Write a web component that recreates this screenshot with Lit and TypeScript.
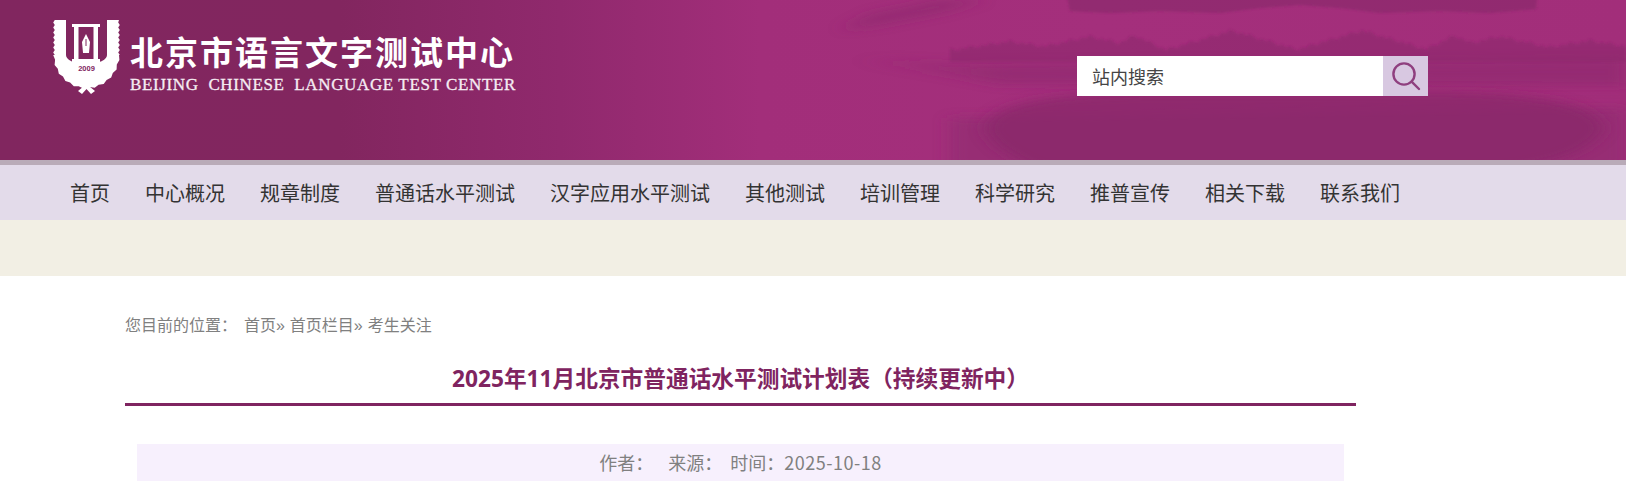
import { LitElement, html, css } from "lit";
import { customElement } from "lit/decorators.js";

const NAV = ["首页","中心概况","规章制度","普通话水平测试","汉字应用水平测试","其他测试","培训管理","科学研究","推普宣传","相关下载","联系我们"];

function jag(points: [number, number][], amp: number): string {
  // walk a polyline, adding small leaf-like teeth so the laurel edge reads as foliage
  const out: string[] = [];
  points.forEach(([x, y], i) => {
    const d = i % 2 === 0 ? amp : -amp;
    const [nx, ny] = points[Math.min(i + 1, points.length - 1)];
    const dx = ny - y, dy = x - nx;
    const l = Math.hypot(dx, dy) || 1;
    out.push(`${(x + (dx / l) * d).toFixed(1)} ${(y + (dy / l) * d).toFixed(1)}`);
  });
  return out.join(" L");
}

function arc(cx: number, cy: number, r: number, ry: number, from: number, to: number, n: number): [number, number][] {
  const pts: [number, number][] = [];
  for (let i = 0; i <= n; i++) {
    const a = from + ((to - from) * i) / n;
    pts.push([cx + r * Math.cos(a), cy + ry * Math.sin(a)]);
  }
  return pts;
}

function vline(x: number, y0: number, y1: number, n: number): [number, number][] {
  const pts: [number, number][] = [];
  for (let i = 0; i <= n; i++) pts.push([x, y0 + ((y1 - y0) * i) / n]);
  return pts;
}

const outer: [number, number][] = [
  ...vline(1, 1, 36, 14),
  ...arc(33.5, 36, 32.5, 33, Math.PI, Math.PI / 2 + 0.1, 10),
  ...arc(33.5, 36, 32.5, 33, Math.PI / 2 - 0.1, 0, 10),
  ...vline(66, 36, 1, 14),
];
const laurelPath = `M${jag(outer, 0.8)} L54 1 L54 36 C54 40 48 43 46 43 L21 43 C19 43 13 40 13 36 L13 1 Z`;

function ridge(x0: number, x1: number, base: number, step: number, peaks: [number, number, number][]): string {
  let d = `M${x0} 62 L${x0} ${base}`;
  let i = 0;
  for (let x = x0; x <= x1; x += step) {
    let h = 0;
    for (const [c, w, a] of peaks) h = Math.max(h, a * Math.max(0, 1 - Math.abs(x - c) / w));
    const t = ((i++ * 7) % 5) * 0.9;
    d += ` L${x} ${(base - h + t).toFixed(1)}`;
  }
  return d + ` L${x1} 62 Z`;
}

@customElement("app-root")
export class AppRoot extends LitElement {
  static styles = css`
    :host { display: block; font-family: "Noto Sans CJK SC", "Liberation Sans", sans-serif; background: #fff; overflow: hidden; }
    .head { position: relative; height: 160px; display: flex; justify-content: space-between; overflow: hidden;
      background: linear-gradient(90deg, #81265f 0, #82265f 340px, #90296d 560px, #a22e7a 760px, #a42f7c 1100px, #a22e7a 1626px); }
    .scenery { position: absolute; inset: 0; width: 100%; height: 100%; }
    .brand { position: relative; display: flex; gap: 10px; margin: 19px 0 0 53px; color: #fff; height: 76px; }
    .emblem { width: 67px; height: 75px; flex: none; }
    .names { display: flex; flex-direction: column; padding-top: 12px; }
    .cn { font-size: 33px; line-height: 40px; letter-spacing: 2px; font-weight: 700; white-space: nowrap; }
    .en { font-family: "Liberation Serif", serif; font-size: 17px; line-height: 18px; margin-top: 5px; white-space: pre; color: #f6edf3; letter-spacing: .63px; -webkit-text-stroke: .3px #f6edf3; }
    .search { position: relative; display: flex; width: 351px; height: 40px; margin: 56px 198px 0 0; }
    .field { flex: 1; background: #fff; color: #444; font-size: 18px; line-height: 40px; padding-left: 15px; }
    .go { width: 45px; background: #d8c8e1; display: flex; align-items: center; justify-content: center; }
    .go svg { width: 30px; height: 30px; }
    .strip { height: 5px; background: #b9abb8; }
    nav { height: 55px; background: #e3dbea; display: flex; gap: 35px; align-items: center; padding-left: 70px; font-size: 20px; color: #333; white-space: nowrap; }
    .beige { height: 56px; background: #f2efe4; }
    main { padding: 40px 0 0 125px; width: 1231px; }
    .crumb { font-family: "Liberation Sans", "Noto Sans CJK SC", sans-serif; font-size: 16px; line-height: 20px; color: #808080; white-space: pre; word-spacing: .5px; }
    .crumb .first { margin-right: 7px; }
    h1 { margin: 0; padding: 25px 0 6px; text-align: center; color: #7f2460; font-size: 22.7px; line-height: 36px; font-weight: 700; border-bottom: 3px solid #7f2460; font-family: "Open Sans", "Noto Sans CJK SC", sans-serif; }
    .meta { margin: 38px 12px 0; height: 37px; line-height: 37px; background: #f7f0fd; color: #808080; font-size: 18px; display: flex; justify-content: center; white-space: nowrap; }
    .meta .a { margin-right: 15px; }
    .meta .b { margin-right: 8px; }
    .meta .date { letter-spacing: .5px; }
  `;

  render() {
    return html`
      <div class="head">
        <svg class="scenery" viewBox="0 0 1626 160" preserveAspectRatio="none" aria-hidden="true">
          <defs>
            <filter id="soft" x="-5%" y="-30%" width="110%" height="160%"><feGaussianBlur stdDeviation="8 5"/></filter>
            <filter id="fine" x="-5%" y="-30%" width="110%" height="160%"><feGaussianBlur stdDeviation="1.2 .8"/></filter>
            <linearGradient id="fade" x1="0" x2="1" y1="0" y2="0">
              <stop offset="0" stop-color="#8a2a6c" stop-opacity="0"/>
              <stop offset=".2" stop-color="#8a2a6c" stop-opacity=".55"/>
              <stop offset="1" stop-color="#8a2a6c" stop-opacity=".55"/>
            </linearGradient>
          </defs>
          <g filter="url(#soft)">
            <path fill="#8a2a6c" opacity=".5" d="M840 30 L870 14 L910 6 L935 0 L985 0 L945 12 L885 24 Z"/>
            <path fill="url(#fade)" d="M850 60 L900 60 L960 64 L1626 58 L1626 86 L1000 84 L930 72 Z"/>
            <path fill="#8f2b70" opacity=".6" d="M950 118 L1626 108 L1626 170 L950 170 Z"/>
          </g>
          <g filter="url(#fine)" fill="#8a2a6c">
            <path opacity=".7" d="M1067 -4 L1537 -4 L1536 9 L1490 13 L1440 11 L1380 13 L1340 8 L1300 5 L1260 8 L1220 13 L1160 11 L1110 13 L1070 11 Z"/>
            <path opacity=".55" d="${ridge(950, 1626, 48, 4, [[1010, 55, 8], [1090, 60, 13], [1135, 30, 14], [1232, 65, 19], [1362, 65, 19], [1455, 30, 14], [1500, 60, 13], [1590, 55, 9]])}"/>
          </g>
          <g filter="url(#soft)">
            <path fill="#882768" opacity=".75" d="M985 128 C990 105 1040 94 1140 92 L1450 92 C1560 94 1596 108 1604 128 C1598 146 1560 165 1500 170 L1040 170 C1005 155 988 142 985 128 Z"/>
          </g>
        </svg>

        <div class="brand">
          <svg class="emblem" viewBox="0 0 67 75" aria-hidden="true">
            <path fill="#fff" d="${laurelPath}"/>
            <path fill="#fff" d="M25 72 L33.5 65 L42 72 L38 75 L33.5 70 L29 75 Z"/>
            <path fill="#fff" fill-rule="evenodd" d="M19 5 H47 V8 H45 V40 H47 V43 H19 V40 H21 V8 H19 Z M25.5 8 V40 H40.5 V8 Z"/>
            <path fill="#fff" d="M33 15 L37 23 L36 34 H30 L29 23 Z"/>
            <path fill="#81265f" d="M32.5 20 H33.5 V27 H32.5 Z"/>
            <text x="33.5" y="51.5" text-anchor="middle" font-family="Liberation Sans" font-size="7.5" font-weight="700" fill="#81265f">2009</text>
          </svg>
          <div class="names">
            <div class="cn">北京市语言文字测试中心</div>
            <div class="en">BEIJING  CHINESE  LANGUAGE TEST CENTER</div>
          </div>
        </div>

        <div class="search">
          <div class="field">站内搜索</div>
          <div class="go">
            <svg viewBox="0 0 30 30" fill="none" stroke="#8f3f7f" stroke-width="2.4" aria-hidden="true">
              <circle cx="13" cy="13" r="10.6"/>
              <path d="M20.6 20.6 L28 28" stroke-linecap="round"/>
            </svg>
          </div>
        </div>
      </div>
      <div class="strip"></div>
      <nav>${NAV.map((n) => html`<span>${n}</span>`)}</nav>
      <div class="beige"></div>
      <main>
        <div class="crumb"><span class="first">您目前的位置：</span>首页» 首页栏目» 考生关注</div>
        <h1>2025年11月北京市普通话水平测试计划表（持续更新中）</h1>
        <div class="meta"><span class="a">作者：</span><span class="b">来源：</span><span>时间：<span class="date">2025-10-18</span></span></div>
      </main>
    `;
  }
}
